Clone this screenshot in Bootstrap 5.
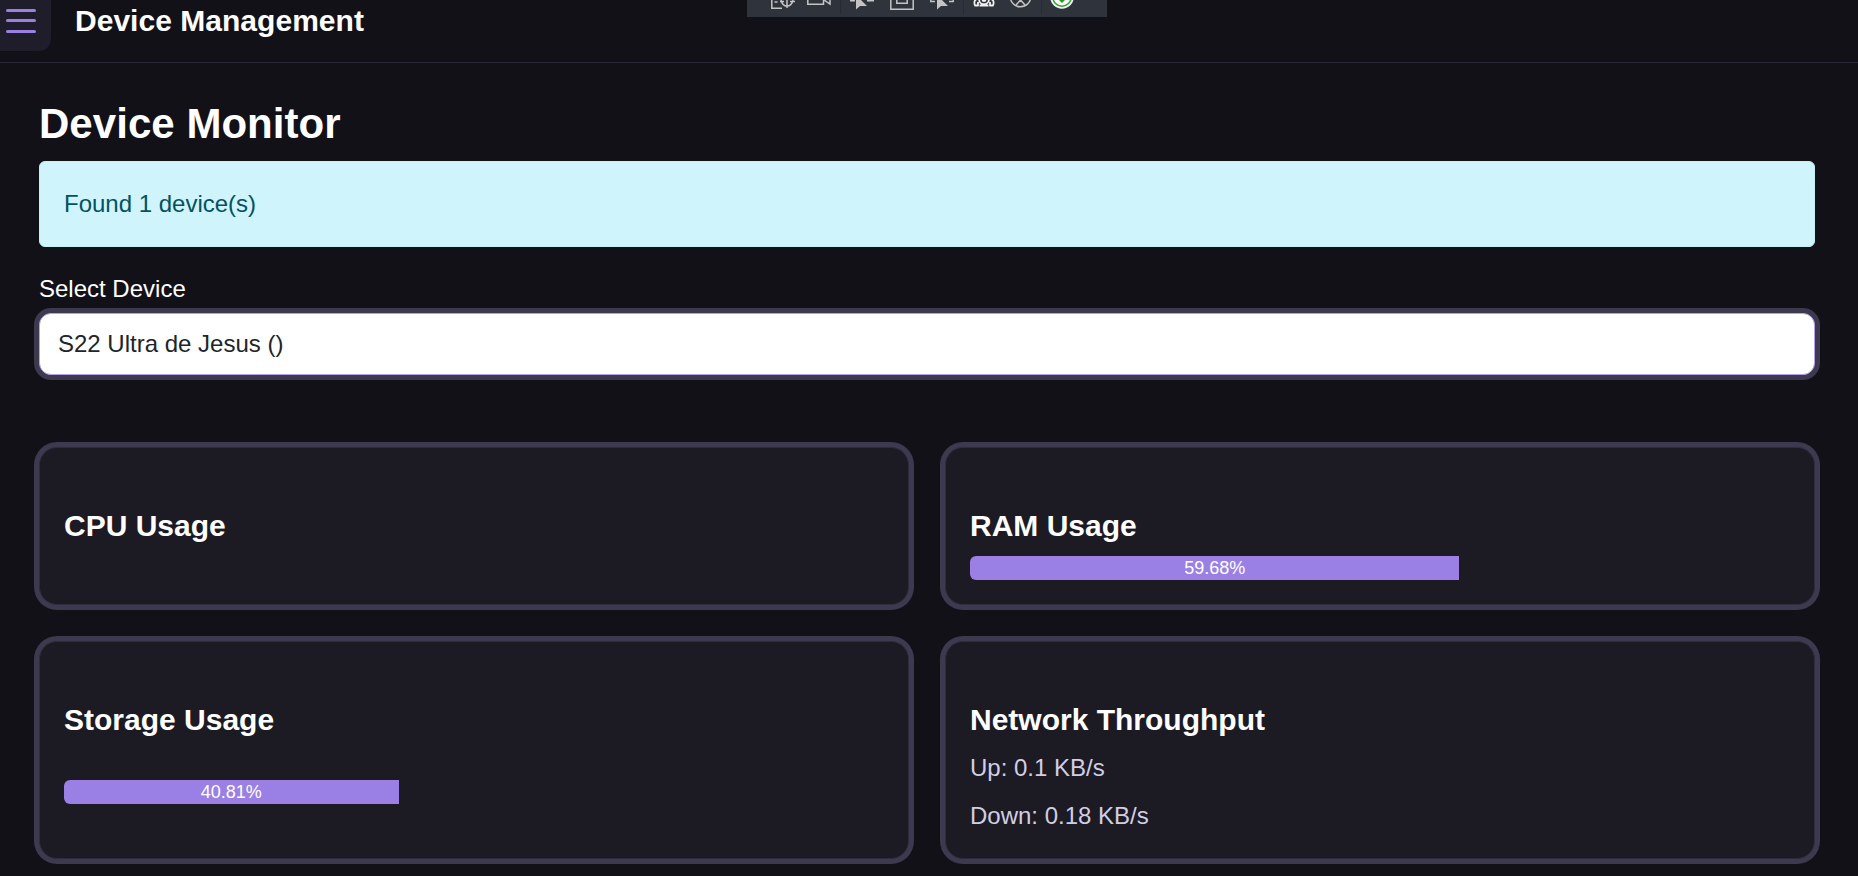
<!DOCTYPE html>
<html lang="en">
<head>
<meta charset="utf-8">
<meta name="viewport" content="width=device-width, initial-scale=1">
<title>Device Management</title>
<link href="https://cdn.jsdelivr.net/npm/bootstrap@5.3.0/dist/css/bootstrap.min.css" rel="stylesheet">
<style>
html { font-size: 24px; overflow: hidden; }
body { background: #121118; color: #fff; font-family: "Liberation Sans", Arial, sans-serif; line-height: 1.5; height: 876px; overflow: hidden; }
.top-bar { height: 63px; border-bottom: 1px solid #2b283a; }
.menu-toggle { width: 51px; height: 51px; background: #1f1d29; border-radius: 0 0 12px 0; padding: 0; border: 0; }
.menu-toggle svg { display: block; }
.page-title { font-size: 30px; line-height: 36px; margin: 3px 0 0 24px; letter-spacing: .03px; }
.main-title { font-size: 42px; line-height: 50px; margin-bottom: 12px; letter-spacing: .04px; }
.main-area { padding: 36px 43px 0 39px; }
.notice { height: 86px; padding: 24px; border-radius: 6px; margin-bottom: 24px; line-height: 36px; border: 1px solid #c6f0f8; background: #cff4fc; color: #055160; }
.device-label { line-height: 36px; margin-bottom: 6px; }
.device-select { height: 62px; padding: 11px 18px; border: 1px solid #b3a1e9; border-radius: 12px; background: #fff; color: #212529; line-height: 38px; box-shadow: 0 0 0 5px #3d394f; }
.panels { margin-top: 72px; gap: 36px; display: grid; grid-template-columns: 1fr 1fr; }
.panel { background: #1c1a23; border: 1px solid #2f2c3d; border-radius: 18px; box-shadow: 0 0 0 5px #3d394f; padding: 60px 24px 0; height: 158px; color: #d2cee3; }
.panel-tall { height: 218px; }
.panel h5 { color: #fff; font-size: 30px; line-height: 36px; margin-bottom: 12px; }
.meter { height: 24px; border-radius: 6px; background: transparent; font-size: 18px; }
.meter-spaced { margin-top: 42px; }
.meter .progress-bar { background: #9a80e4; line-height: 24px; }
.panel p { line-height: 36px; margin-bottom: 12px; }
.debug-bar { left: 747px; top: 0; width: 360px; height: 17px; background: #2f333c; padding-left: 24px; }
.debug-bar svg { width: 24px; height: 17px; flex: none; display: block; fill: none; stroke: #c4c4c4; stroke-width: 1.5; }
.debug-bar i { width: 1px; height: 14px; background: #272b34; flex: none; margin: 0 9px; }
.debug-bar i.tight { margin: 0 8px 0 9px; }
.debug-bar .gap-sm { margin-left: 11px; }
.debug-bar .gap-md { margin-left: 12px; }
.debug-bar .gap-lg { margin-left: 16px; }
</style>
</head>
<body>
<header class="top-bar d-flex align-items-start">
  <button class="menu-toggle" aria-label="Menu"><svg width="51" height="51" stroke="#9a80e4" stroke-width="3" stroke-linecap="round"><path d="M7.5 10.500h27M7.500 20.500h27M7.500 31.500h27"/></svg></button>
  <h1 class="page-title fw-bold">Device Management</h1>
</header>
<div class="debug-bar position-absolute d-flex">
  <svg><path d="M.8 0V8.200H11M3.500 2h3M10 0c1 4.500 3.500 6 6 6s5-1.500 6-6M16 -1v9M9 1.500h4M19 1.500h5"/></svg>
  <svg class="gap-md"><path d="M.8 0V4.300H16.500V0M17 0l6 4V0"/></svg>
  <i></i>
  <svg><path d="M0 .7h5M17 .7h7"/><path d="M6-1v10.500l4-3.500h7L8-3z" fill="#c4c4c4" stroke="none"/></svg>
  <svg class="gap-lg"><path d="M.8 0V9.200H23.200V0M6.800 0V3.200H17.200V0"/></svg>
  <svg class="gap-lg"><path d="M.8 0V1.500H5M19 1.500h4.200V0"/><path d="M7-1v10.500l4-3.500h7L9-3z" fill="#c4c4c4" stroke="none"/></svg>
  <i class="tight"></i>
  <svg stroke-linejoin="round"><path style="stroke:#f1f1f1;stroke-width:1.8" d="M5-1C2 0 2 3 3 5.500H6V2M19-1c3 1 3 4 2 6.500H18V2M7-1c0 7 10 7 10 0M7.500 5.500h9M10.500 0c0 1.500 3 1.500 3 0"/></svg>
  <svg class="gap-md"><circle cx="12.500" cy="-3.500" r="10.300"/><path d="M12.500-2v2l-4.500 5M12.500 0l4.500 5"/></svg>
  <i class="tight"></i>
  <svg><circle cx="12" cy="-3" r="11.800" fill="#f2f2f2" stroke="none"/><circle cx="12" cy="-3" r="9.200" fill="#f7fff7" stroke="#36a033"/><path fill="#249b24" stroke="none" d="M8-1h8l-4 4z"/></svg>
</div>
<main class="main-area">
  <h2 class="main-title fw-bold">Device Monitor</h2>
  <div class="notice">Found 1 device(s)</div>
  <label class="device-label d-block">Select Device</label>
  <div class="device-select">S22 Ultra de Jesus ()</div>
  <section class="panels">
    <div class="panel"><h5 class="fw-bold">CPU Usage</h5></div>
    <div class="panel"><h5 class="fw-bold">RAM Usage</h5>
      <div class="progress meter"><div class="progress-bar" style="width:59.68%">59.68%</div></div></div>
    <div class="panel panel-tall"><h5 class="fw-bold">Storage Usage</h5>
      <div class="progress meter meter-spaced"><div class="progress-bar" style="width:40.81%">40.81%</div></div></div>
    <div class="panel panel-tall"><h5 class="fw-bold">Network Throughput</h5>
      <p>Up: 0.1 KB/s</p><p>Down: 0.18 KB/s</p></div>
  </section>
</main>
<script src="https://cdn.jsdelivr.net/npm/bootstrap@5.3.0/dist/js/bootstrap.bundle.min.js"></script>
</body>
</html>
